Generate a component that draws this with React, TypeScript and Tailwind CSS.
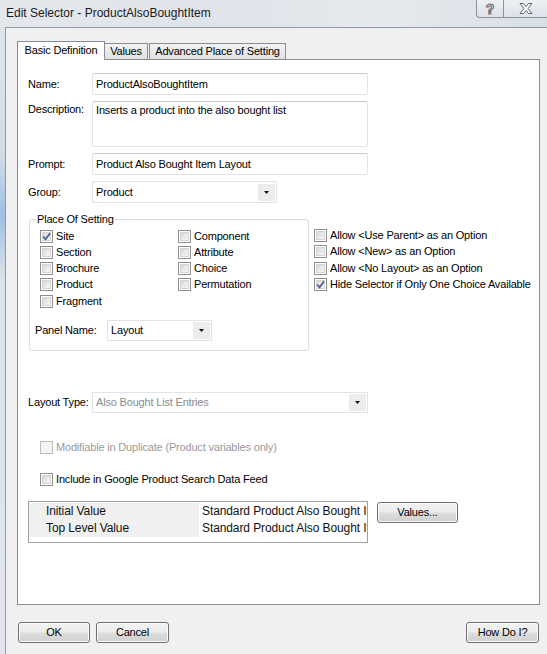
import React from "react";

const FONT = "font-['Liberation_Sans',Arial,sans-serif]";

function Check({ checked = false, disabled = false }: { checked?: boolean; disabled?: boolean }) {
  return (
    <span
      className={`flex h-[13px] w-[13px] shrink-0 border p-px ${
        disabled ? "border-[#bcbcbc] bg-[#f4f4f4]" : "border-[#8e8f8f] bg-white"
      }`}
    >
      <span
        className={`relative flex-1 ${
          disabled
            ? "bg-[#f4f4f4]"
            : "border border-[#d4d4d4] bg-[linear-gradient(135deg,#d9d9d9,#f7f7f7)]"
        }`}
      >
        {checked && (
          <svg viewBox="0 0 9 9" className="absolute -left-px -top-px h-[9px] w-[9px]">
            <path d="M1.2 4.6 L3.6 7.3 L8 1.2" fill="none" stroke="#4a5f9a" strokeWidth="1.7" />
          </svg>
        )}
      </span>
    </span>
  );
}

function CheckItem({
  label,
  checked,
  disabled,
  className = "h-[16.25px]",
}: {
  label: string;
  checked?: boolean;
  disabled?: boolean;
  className?: string;
}) {
  return (
    <div className={`flex items-center gap-[3px] whitespace-nowrap ${className}`}>
      <Check checked={checked} disabled={disabled} />
      <span className={disabled ? "text-[#9a9a9a]" : "text-black"}>{label}</span>
    </div>
  );
}

function Select({
  value,
  className,
  disabled = false,
}: {
  value: string;
  className: string;
  disabled?: boolean;
}) {
  return (
    <div className={`flex items-center border border-[#e2e3e6] bg-white pl-[3px] ${className}`}>
      <span className={`flex-1 truncate ${disabled ? "text-[#8d8d8d]" : "text-black"}`}>{value}</span>
      <span className="mr-px flex h-[17px] w-[17px] items-center justify-center bg-[#ececec]">
        <svg viewBox="0 0 5 3" className="h-[3px] w-[5px]">
          <path d="M0 0 H5 L2.5 3 Z" fill="#111" />
        </svg>
      </span>
    </div>
  );
}

function TextBox({ value, className }: { value: string; className: string }) {
  return (
    <div
      className={`rounded-[2px] border border-[#e2e3ea] border-t-[#c5c8cf] bg-white pl-[3px] ${className}`}
    >
      {value}
    </div>
  );
}

function Button({ children, className }: { children: React.ReactNode; className: string }) {
  return (
    <div
      className={`flex h-[21px] items-center justify-center rounded-[3px] border border-[#707070] bg-[linear-gradient(#f3f3f3_0%,#ebebeb_48%,#dddddd_52%,#cfcfcf_100%)] shadow-[inset_0_0_0_1px_#fbfbfb] ${className}`}
    >
      {children}
    </div>
  );
}

function Row({ label, children, top = false }: { label: string; children: React.ReactNode; top?: boolean }) {
  return (
    <div className={`flex ${top ? "items-start" : "items-center"}`}>
      <div className={`w-[64px] shrink-0 whitespace-nowrap ${top ? "pt-[2px]" : ""}`}>{label}</div>
      {children}
    </div>
  );
}

export default function App() {
  return (
    <div
      className={`flex h-[654px] w-[547px] flex-col overflow-hidden text-[11px] leading-[13px] tracking-[-0.18px] ${FONT}`}
    >
      {/* title bar */}
      <div className="flex h-[27px] shrink-0 items-start justify-between bg-[linear-gradient(90deg,#e4e8ec,#dfe4ea_40%,#e6eaee_70%,#d9dfe6)]">
        <div className="pl-[6px] pt-[6px] text-[12px] leading-[14px] tracking-normal text-[#1b1b1b]">
          Edit Selector - ProductAlsoBoughtItem
        </div>
        <div className="flex h-[18px]">
          <div className="flex w-[28px] items-center justify-center rounded-bl-[4px] border border-t-0 border-[#8d939b] bg-[linear-gradient(#eef1f4,#dde2e8)] text-[14px] font-bold leading-none text-white [-webkit-text-stroke:1px_#5d6570]">
            ?
          </div>
          <div className="flex w-[43px] items-center justify-center border-b border-[#8d939b] bg-[linear-gradient(#eef1f4,#dde2e8)]">
            <svg viewBox="0 0 14 11" className="h-[11px] w-[14px]">
              <path
                d="M1 0.5 H4.5 L7 3.6 L9.5 0.5 H13 L9 5.5 L13 10.5 H9.5 L7 7.4 L4.5 10.5 H1 L5 5.5 Z"
                fill="#fff"
                stroke="#5d6570"
                strokeWidth="1"
              />
            </svg>
          </div>
        </div>
      </div>

      <div className="flex flex-1">
        <div className="w-[5px] shrink-0 bg-[linear-gradient(#dfe4ea,#d3dde8_20%,#9fc0e0_30%,#dbe2e9_40%,#e2e6ea)]" />
        <div className="flex flex-1 flex-col border-l border-t border-[#8f98a3] bg-[#f0f0f0]">
          {/* tabs */}
          <div className="ml-[11px] mt-[13px] flex items-end">
            <div className="relative z-10 -mb-px flex h-[19px] w-[88px] items-center justify-center border border-b-0 border-[#898c95] bg-white pb-px">
              Basic Definition
            </div>
            <div className="flex h-[16px] w-[43px] items-center justify-center border border-l-0 border-b-0 border-[#898c95] bg-[linear-gradient(#f2f2f2,#e1e1e1)]">
              Values
            </div>
            <div className="ml-px flex h-[16px] w-[137px] items-center justify-center border border-b-0 border-[#898c95] bg-[linear-gradient(#f2f2f2,#e1e1e1)]">
              Advanced Place of Setting
            </div>
          </div>

          {/* tab panel */}
          <div className="ml-[11px] flex h-[546px] w-[523px] flex-col border border-[#898c95] bg-white px-[10px] pt-[13px]">
            <Row label="Name:">
              <TextBox value="ProductAlsoBoughtItem" className="flex h-[22px] w-[276px] items-center" />
            </Row>
            <div className="mt-[6px]">
              <Row label="Description:" top>
                <TextBox
                  value="Inserts a product into the also bought list"
                  className="h-[46px] w-[276px] pt-[2px]"
                />
              </Row>
            </div>
            <div className="mt-[6px]">
              <Row label="Prompt:">
                <TextBox value="Product Also Bought Item Layout" className="flex h-[22px] w-[276px] items-center" />
              </Row>
            </div>
            <div className="mt-[6px]">
              <Row label="Group:">
                <Select value="Product" className="h-[22px] w-[185px]" />
              </Row>
            </div>

            {/* place of setting */}
            <div className="mt-[10px] flex items-start">
              <fieldset className="ml-px h-[138px] w-[280px] shrink-0 rounded-[3px] border border-[#d5dfe5] p-0">
                <legend className="ml-[6px] px-px leading-[13px]">Place Of Setting</legend>
                <div className="ml-[10px] mt-[2px] grid grid-cols-[138px_1fr]">
                  <div>
                    <CheckItem label="Site" checked />
                    <CheckItem label="Section" />
                    <CheckItem label="Brochure" />
                    <CheckItem label="Product" />
                    <CheckItem label="Fragment" />
                  </div>
                  <div>
                    <CheckItem label="Component" />
                    <CheckItem label="Attribute" />
                    <CheckItem label="Choice" />
                    <CheckItem label="Permutation" />
                  </div>
                </div>
                <div className="ml-[5px] mt-[11px] flex items-center">
                  <div className="w-[72px]">Panel Name:</div>
                  <Select value="Layout" className="h-[21px] w-[105px]" />
                </div>
              </fieldset>
              <div className="ml-[5px] shrink-0 pt-[14px]">
                <CheckItem label="Allow <Use Parent> as an Option" className="h-[16.5px]" />
                <CheckItem label="Allow <New> as an Option" className="h-[16.5px]" />
                <CheckItem label="Allow <No Layout> as an Option" className="h-[16.5px]" />
                <CheckItem label="Hide Selector if Only One Choice Available" checked className="h-[16.5px]" />
              </div>
            </div>

            <div className="mt-[41px]">
              <Row label="Layout Type:">
                <Select value="Also Bought List Entries" disabled className="h-[21px] w-[276px]" />
              </Row>
            </div>

            <div className="ml-[12px] mt-[26px]">
              <CheckItem label="Modifiable in Duplicate (Product variables only)" disabled className="h-[16px]" />
            </div>
            <div className="ml-[12px] mt-[16px]">
              <CheckItem label="Include in Google Product Search Data Feed" className="h-[16px]" />
            </div>

            <div className="mt-[14px] flex items-start">
              <div className="h-[42px] w-[340px] overflow-hidden border border-[#a0a0a0] bg-white pt-px text-[12px] leading-[17px] tracking-[-0.1px] text-[#111]">
                {["Initial Value", "Top Level Value"].map((name) => (
                  <div key={name} className="flex h-[17px]">
                    <div className="w-[170px] shrink-0 bg-[#f0f0f0] pl-[17px]">{name}</div>
                    <div className="flex-1 overflow-hidden whitespace-nowrap pl-[3px]">
                      Standard Product Also Bought Item
                    </div>
                  </div>
                ))}
              </div>
              <Button className="ml-[9px] mt-[1px] h-[20px] w-[81px]">Values...</Button>
            </div>
          </div>

          {/* footer buttons */}
          <div className="ml-[12px] mt-[17px] flex w-[521px]">
            <Button className="w-[72px]">OK</Button>
            <Button className="ml-[6px] w-[73px]">Cancel</Button>
            <Button className="ml-auto w-[73px]">How Do I?</Button>
          </div>
        </div>
      </div>
    </div>
  );
}
